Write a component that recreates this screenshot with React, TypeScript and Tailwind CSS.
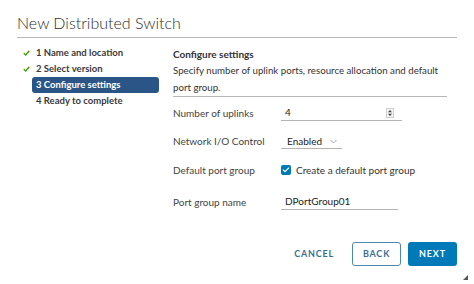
import { Check } from 'lucide-react'

const steps = [
  { label: '1 Name and location', done: true },
  { label: '2 Select version', done: true },
  { label: '3 Configure settings', active: true },
  { label: '4 Ready to complete' },
]

function Spinner() {
  return (
    <svg width="8" height="10" viewBox="0 0 8 10" className="block">
      <rect x="0.5" y="0.5" width="7" height="9" fill="#f3f3f3" stroke="#d0d0d0" />
      <path d="M4 2 L6 4.2 H2 Z" fill="#444" />
      <path d="M4 8 L6 5.8 H2 Z" fill="#444" />
    </svg>
  )
}

function StepCheck() {
  return (
    <svg width="7" height="6" viewBox="0 0 7 6" className="block">
      <path d="M0.8 3.2 L2.7 5 L6.3 0.9" fill="none" stroke="#5aa61f" strokeWidth="1.6" />
    </svg>
  )
}

export default function App() {
  return (
    <div
      className="relative w-[474px] h-[284px] bg-white text-[#333] overflow-hidden"
      style={{ fontFamily: 'Lato, "Open Sans", sans-serif' }}
    >
      <div className="mx-[17px] pt-[11px]">
        <h1 className="h-[27px] leading-[24px] text-[16px] font-light text-[#2e2e2e] border-b border-[#b7b7b7]">
          New Distributed Switch
        </h1>
      </div>

      <div className="flex pl-[23px] pt-[7px]">
        <ul className="w-[136px] shrink-0">
          {steps.map((s) => (
            <li key={s.label} className="flex items-center h-[16px]">
              <span className="w-[9px] shrink-0 flex items-center">{s.done && <StepCheck />}</span>
              <span
                className={
                  s.active
                    ? 'flex-1 h-[16px] leading-[16px] px-[4px] rounded-[3px] bg-[#2b5586] text-white text-[9.5px] font-bold'
                    : 'flex-1 h-[16px] leading-[16px] px-[4px] text-[9.5px] font-bold text-[#3a3a3a]'
                }
              >
                {s.label}
              </span>
            </li>
          ))}
        </ul>

        <div className="ml-[14px] w-[274px]">
          <div className="pt-[1px] border-b border-[#b7b7b7]">
            <h2 className="text-[10px] leading-[16px] font-bold text-[#333]">Configure settings</h2>
            <p className="text-[9.7px] leading-[17px] text-[#333]">
              Specify number of uplink ports, resource allocation and default
              <br />
              port group.
            </p>
          </div>

          <div className="flex items-center mt-[8px] text-[10px] text-[#444]">
            <span className="w-[108px]">Number of uplinks</span>
            <div className="w-[121px] h-[16px] flex items-center justify-between pl-[4px] pr-[8px] border-b border-[#b3b3b3]">
              <span className="text-[#222]">4</span>
              <Spinner />
            </div>
          </div>

          <div className="flex items-center mt-[13px] text-[10px] text-[#444]">
            <span className="w-[108px]">Network I/O Control</span>
            <div className="w-[61px] h-[15px] flex items-center gap-[8px] pl-[6px] border-b border-[#b3b3b3]">
              <span className="text-[#222]">Enabled</span>
              <svg width="7" height="5" viewBox="0 0 7 5">
                <path d="M0.5 1 L3.5 4 L6.5 1" fill="none" stroke="#9a9a9a" strokeWidth="0.9" />
              </svg>
            </div>
          </div>

          <div className="flex items-center h-[16px] mt-[13px] text-[10px] text-[#444]">
            <span className="w-[108px]">Default port group</span>
            <span className="w-[10px] h-[10px] rounded-[2px] bg-[#0079b8] flex items-center justify-center">
              <Check size={8} strokeWidth={3.5} className="text-white" />
            </span>
            <span className="ml-[5px] text-[#333]">Create a default port group</span>
          </div>

          <div className="flex items-center mt-[16px] text-[10px] text-[#444]">
            <span className="w-[108px]">Port group name</span>
            <div className="w-[117px] h-[16px] flex items-center pl-[4px] border-b border-[#b3b3b3]">
              <span className="text-[#222]">DPortGroup01</span>
            </div>
          </div>
        </div>
      </div>

      <div className="flex justify-end items-center gap-[7px] pr-[17px] mt-[32px] text-[9px] font-bold tracking-[0.09em]">
        <button className="h-[24px] px-[11px] text-[#3b6e92]">CANCEL</button>
        <button className="h-[24px] w-[49px] rounded-[3px] border border-[#4f88ad] text-[#3b6e92]">BACK</button>
        <button className="h-[24px] w-[49px] rounded-[3px] bg-[#0079b8] text-white">NEXT</button>
      </div>

      <svg width="5" height="5" viewBox="0 0 5 5" className="absolute right-[6px] bottom-[4px]">
        <path d="M5 0 L5 5 L0 5 Z" fill="#555" />
      </svg>
    </div>
  )
}
